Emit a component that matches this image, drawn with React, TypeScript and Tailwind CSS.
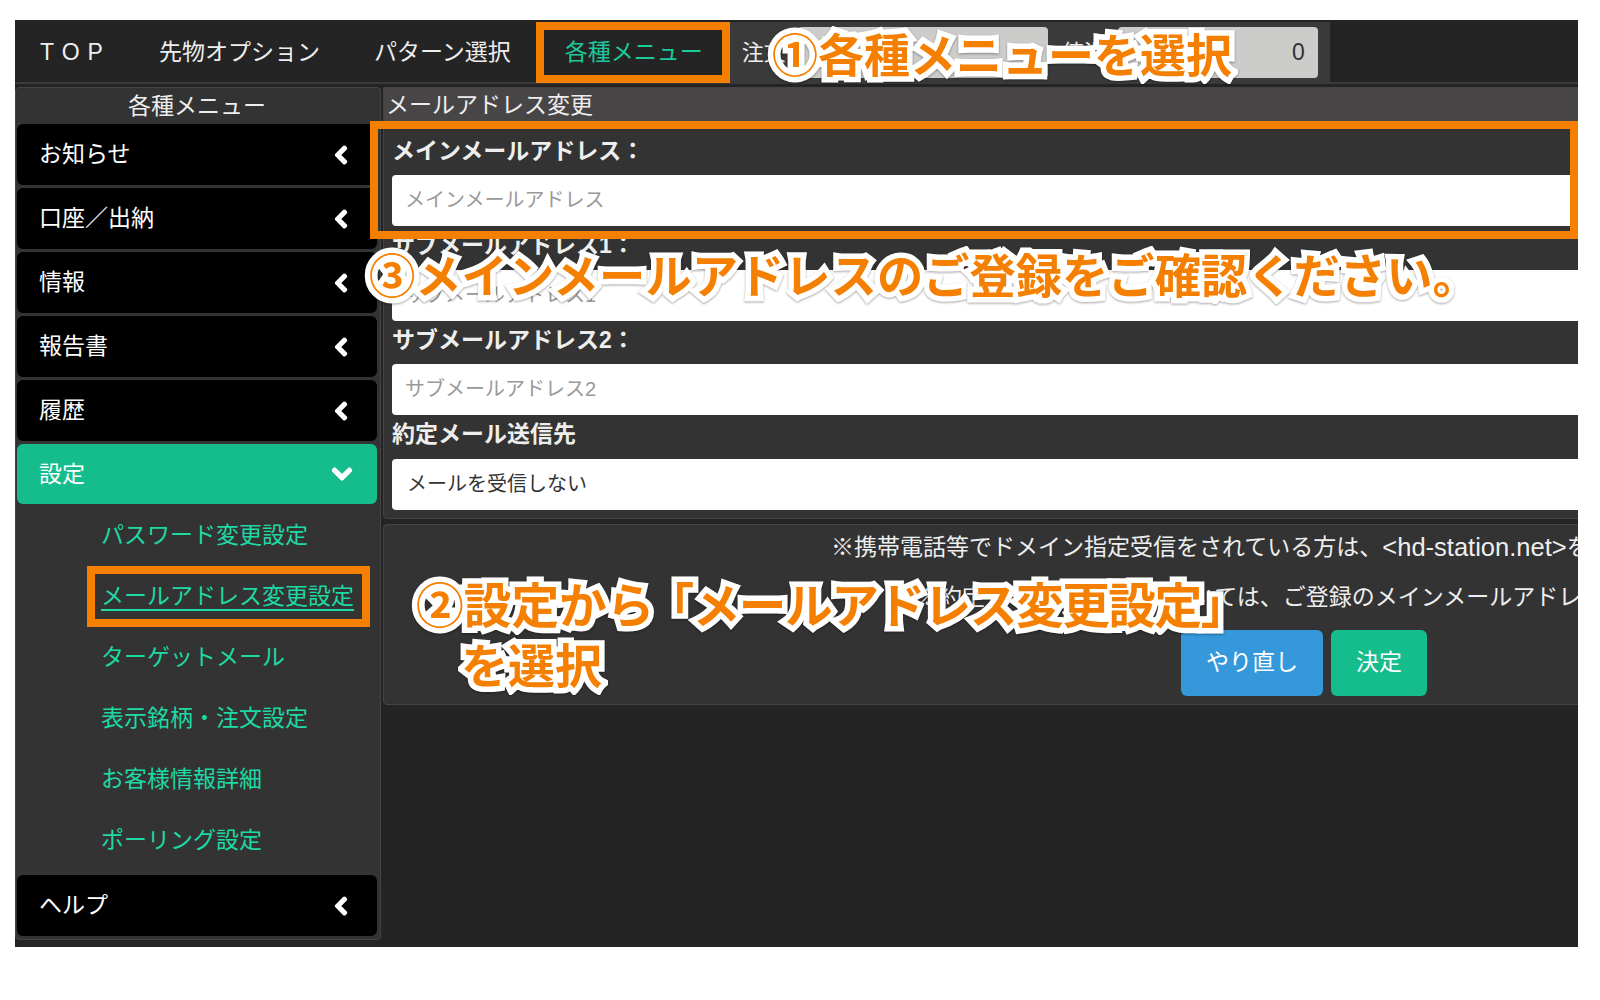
import { FaChevronLeft, FaChevronDown } from 'react-icons/fa';

const NAV = ['先物オプション', 'パターン選択'];
const SUB_LINKS = ['パスワード変更設定', 'メールアドレス変更設定', 'ターゲットメール', '表示銘柄・注文設定', 'お客様情報詳細', 'ポーリング設定'];
const FIELDS = [
  { label: 'メインメールアドレス：', placeholder: 'メインメールアドレス' },
  { label: 'サブメールアドレス1：', placeholder: 'サブメールアドレス1' },
  { label: 'サブメールアドレス2：', placeholder: 'サブメールアドレス2' },
];

function SideRow({ label }: { label: string }) {
  return (
    <div className="h-[61px] ml-[1px] mr-[3px] pl-[22px] pr-[26px] flex items-center justify-between bg-black rounded-md text-white">
      <span>{label}</span>
      <FaChevronLeft size={20} stroke="currentColor" strokeWidth={50} />
    </div>
  );
}

// Orange callout text with a thick white outline
function Callout({ className, children }: { className: string; children: React.ReactNode }) {
  return (
    <div className={`absolute whitespace-nowrap font-bold text-[#f57f00] [-webkit-text-stroke:11px_white] [paint-order:stroke_fill] leading-none drop-shadow-[0_1px_1px_rgba(0,0,0,0.35)] ${className}`}>
      {children}
    </div>
  );
}

function Highlight({ className }: { className: string }) {
  return <div className={`absolute border-[8px] border-[#f57f00] ${className}`} />;
}

export default function App() {
  return (
    <div className="h-screen bg-white pt-[20px] pl-[15px] pr-[22px] font-['Liberation_Sans','Noto_Sans_CJK_JP',sans-serif] text-[23px]">
      <div className="relative h-[927px] overflow-hidden bg-[#242424]">
        {/* Top bar */}
        <div className="h-[64px] flex items-center text-[#eeeeee] border-b-2 border-[#3a3a3a]">
          <span className="pl-[25px] pr-[21px] tracking-[8px] font-light pt-[2px]">TOP</span>
          {NAV.map(n => <span key={n} className="px-[27px] pt-[2px]">{n}</span>)}
          <span className="px-[27px] text-[#1bc99a] pt-[2px]">各種メニュー</span>
          <div className="self-start mt-[2px] -ml-[5px] w-[605px] h-[61px] bg-[#3a3a3a] flex items-center gap-[12px] pl-[17px] pr-[12px]">
            <span className="text-[22px]">注文</span>
            <div className="w-[250px] h-[51px] bg-[#cccccb] rounded" />
            <span className="text-[22px] ml-[2px]">値洗</span>
            <div className="flex-1 h-[51px] bg-[#cccccb] rounded flex items-center justify-end pr-[13px] text-[#333333]">0</div>
          </div>
        </div>

        <div className="flex mt-[3px] gap-[2px]">
          {/* Side menu */}
          <aside className="w-[366px] shrink-0 h-[853px] bg-[#333333] border border-[#444444] rounded text-center">
            <div className="h-[36px] flex items-center justify-center text-[#eeeeee] pr-[2px]">各種メニュー</div>
            <div className="flex flex-col gap-[3px] text-left">
              {['お知らせ', '口座／出納', '情報', '報告書', '履歴'].map(r => <SideRow key={r} label={r} />)}
              <div className="h-[60px] ml-[1px] mr-[3px] pl-[22px] pr-[24px] flex items-center justify-between bg-[#15bc8c] rounded-md text-white">
                <span>設定</span>
                <FaChevronDown size={22} stroke="currentColor" strokeWidth={40} />
              </div>
            </div>
            <ul className="text-left h-[371px] pt-[1px]">
              {SUB_LINKS.map((s, i) => (
                <li key={s} className="h-[61px] pl-[85px] flex items-center text-[#1dd9a3]">
                  <span className={i === 1 ? 'underline underline-offset-[5px]' : ''}>{s}</span>
                </li>
              ))}
            </ul>
            <div className="text-left"><SideRow label="ヘルプ" /></div>
          </aside>

          {/* Mail address form */}
          <main className="w-[1400px] shrink-0">
            <div className="bg-[#333333] border border-[#444444] rounded-b">
              <div className="h-[36px] bg-[#474546] flex items-center px-[2px] pb-[1px] text-[#eeeeee]">メールアドレス変更</div>
              <div className="pt-[8px] px-[8px] pb-[8px]">
                {FIELDS.map(f => (
                  <div key={f.label} className="h-[94.5px]">
                    <div className="h-[43px] flex items-center pb-[5px] font-bold text-[#eeeeee]">{f.label}</div>
                    <input readOnly placeholder={f.placeholder} className="block w-full h-[51px] bg-white rounded px-[13px] placeholder:text-[#999999] outline-none text-[20px]" />
                  </div>
                ))}
                <div className="h-[43px] flex items-center pb-[5px] font-bold text-[#eeeeee]">約定メール送信先</div>
                <div className="h-[51px] bg-white rounded px-[15px] flex items-center text-[#333333] text-[20px]">メールを受信しない</div>
              </div>
            </div>
            <div className="mt-[5px] h-[181px] bg-[#333333] border border-[#444444] rounded text-[#eeeeee] whitespace-nowrap">
              <p className="pl-[447px] h-[45px] flex items-center">※携帯電話等でドメイン指定受信をされている方は、<span className="text-[25.5px]">&lt;hd-station.net&gt;</span>を受信できるよう設定してください。</p>
              <p className="pl-[532px] h-[52px] pt-[4px] flex items-center">※約定メールの送信先については、ご登録のメインメールアドレスをご確認ください。</p>
              <div className="flex gap-[8px] pl-[797px] mt-[8px]">
                <button className="w-[142px] h-[66px] rounded-md bg-[#3498db] text-white">やり直し</button>
                <button className="w-[96px] h-[66px] rounded-md bg-[#15bc8c] text-white">決定</button>
              </div>
            </div>
          </main>
        </div>

        {/* Highlight frames and callouts */}
        <Highlight className="left-[521px] top-[2px] w-[194px] h-[61px]" />
        <Highlight className="left-[355px] top-[101px] w-[1208px] h-[118px]" />
        <Highlight className="left-[72px] top-[546px] w-[283px] h-[61px]" />
        <Callout className="left-[757px] top-[13px] text-[46px]">①各種メニューを選択</Callout>
        <Callout className="left-[354px] top-[234px] text-[46.3px]">③メインメールアドレスのご登録をご確認ください。</Callout>
        <Callout className="left-[401px] top-[563px] text-[47.7px]">②設定から<span className="-ml-[8px] tracking-[-1.5px]">「メールアドレス変更設定」</span></Callout>
        <Callout className="left-[446px] top-[623px] text-[47px]">を選択</Callout>
      </div>
    </div>
  );
}
